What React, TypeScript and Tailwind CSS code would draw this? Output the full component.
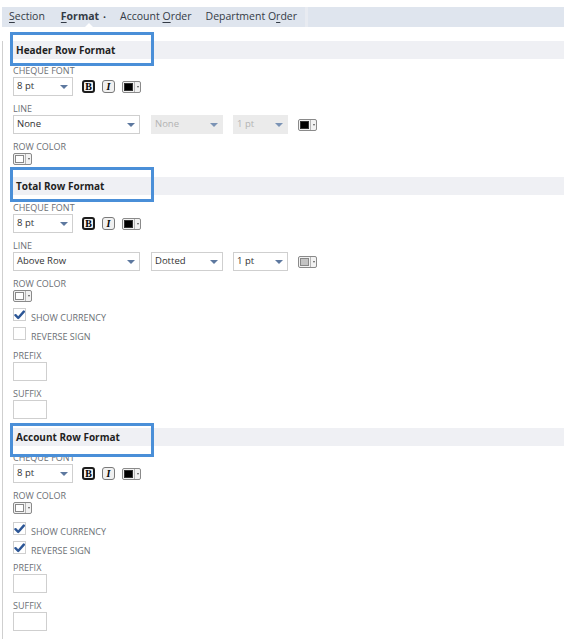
import React from 'react';

const font = { fontFamily: '"Open Sans", "Liberation Sans", sans-serif' };

function Label({ children, className = '' }: { children: React.ReactNode; className?: string }) {
    return <div className={`h-[13px] leading-[13px] text-[9px] uppercase text-[#6c6f75] ${className}`}>{children}</div>;
}

function Arrow({ disabled }: { disabled?: boolean }) {
    return (
        <span
            className={`w-0 h-0 border-l-[4.5px] border-r-[4.5px] border-t-[4.5px] border-l-transparent border-r-transparent ${
                disabled ? 'border-t-[#7b93b5]' : 'border-t-[#5d789f]'
            }`}
        />
    );
}

function Select({ value, width, disabled }: { value: string; width: string; disabled?: boolean }) {
    return (
        <div
            className={`h-[19px] flex items-center justify-between pl-[3px] pr-[4px] text-[9.5px] ${width} ${
                disabled ? 'bg-[#ebebeb] text-[#b3b3b3] border border-[#ebebeb]' : 'bg-white text-[#333] border border-[#cfcfcf]'
            }`}
        >
            <span>{value}</span>
            <Arrow disabled={disabled} />
        </div>
    );
}

function ColorButton({ fill }: { fill: 'black' | 'white' | 'gray' }) {
    const inner =
        fill === 'black'
            ? 'bg-black border-[#333]'
            : fill === 'gray'
            ? 'bg-[#c4c4c4] border-[#888]'
            : 'bg-white border-[#888]';
    return (
        <div className="w-[19px] h-[12px] flex rounded-[2px] border border-[#8a8a8a] bg-[#f2f2f2]">
            <div className="flex-1 flex items-center justify-center border-r border-[#b5b5b5]">
                <div className={`w-[9px] h-[8px] border ${inner}`} />
            </div>
            <div className="w-[5px] flex items-center justify-center">
                <span className="w-0 h-0 border-l-[1.5px] border-r-[1.5px] border-t-[2px] border-l-transparent border-r-transparent border-t-[#555]" />
            </div>
        </div>
    );
}

function StyleButtons() {
    return (
        <>
            <div className="ml-[9px] w-[13px] h-[13px] rounded-[3px] border-[2px] border-[#1c1c1c] bg-[#f0f0f0] flex items-center justify-center text-[10px] font-bold leading-none text-black" style={{ fontFamily: '"Liberation Serif", serif' }}>
                B
            </div>
            <div className="ml-[7px] w-[13px] h-[13px] rounded-[3px] border border-[#7a7a7a] bg-[#f0f0f0] flex items-center justify-center text-[10px] font-bold italic leading-none text-black" style={{ fontFamily: '"Liberation Serif", serif' }}>
                I
            </div>
            <div className="ml-[7px]">
                <ColorButton fill="black" />
            </div>
        </>
    );
}

function FontRow() {
    return (
        <div className="flex items-center">
            <Select value="8 pt" width="w-[60px]" />
            <StyleButtons />
        </div>
    );
}

function Checkbox({ checked, label, className = '' }: { checked?: boolean; label: string; className?: string }) {
    return (
        <div className={`flex items-start h-[13px] ${className}`}>
            <div className="w-[13px] h-[13px] border border-[#cfcfcf] bg-white flex items-center justify-center">
                {checked && (
                    <svg width="11" height="10" viewBox="0 0 11 10">
                        <path d="M1.5 5.2 L4.2 8 L9.8 1.6" fill="none" stroke="#2c5696" strokeWidth="2.4" strokeLinecap="round" strokeLinejoin="round" />
                    </svg>
                )}
            </div>
            <span className="ml-[5px] mt-[3px] leading-[13px] text-[9px] text-[#6c6f75]">{label}</span>
        </div>
    );
}

function TextBox() {
    return <div className="w-[34px] h-[19px] border border-[#cfcfcf] bg-white" />;
}

function SectionHeader({ title, boxTop, boxHeight, className = '' }: { title: string; boxTop: string; boxHeight: string; className?: string }) {
    return (
        <div className={`relative -ml-[3px] h-[18px] bg-[#eff0f4] flex items-center pl-[6px] ${className}`}>
            <span className="text-[10px] font-bold text-[#1f1f1f]">{title}</span>
            <div className={`absolute left-0 w-[144px] border-[3px] border-[#4a8fd8] ${boxTop} ${boxHeight}`} />
        </div>
    );
}

export default function App() {
    return (
        <div className="w-[564px] h-[639px] bg-white pt-[7px] overflow-hidden" style={font}>
            <div className="relative ml-[2px] h-[20px] bg-[#dfe5ee] flex items-center text-[10.5px] text-[#343b46]">
                <span className="ml-[7px]">
                    <span className="underline underline-offset-2">S</span>ection
                </span>
                <span className="ml-[16px] font-bold">
                    <span className="underline underline-offset-2">F</span>ormat
                </span>
                <span className="ml-[4px] text-[8px]">•</span>
                <span className="ml-[14px]">
                    Account <span className="underline underline-offset-2">O</span>rder
                </span>
                <span className="ml-[14px]">
                    Department O<span className="underline underline-offset-2">r</span>der
                </span>
                <div className="ml-[8px] w-[3px] h-full bg-[#e8ebf1]" />
                <span className="absolute left-[83px] bottom-0 w-0 h-0 border-l-[4px] border-r-[4px] border-b-[4px] border-l-transparent border-r-transparent border-b-white" />
            </div>

            <div className="ml-[2px] h-[611px] border-l border-b border-[#cfcfcf] pl-[10px]">
                {/* Header Row Format */}
                <SectionHeader title="Header Row Format" boxTop="-top-[9px]" boxHeight="h-[34px]" className="mt-[14px]" />
                <Label className="mt-[5px]">Cheque Font</Label>
                <FontRow />
                <Label className="mt-[6px]">Line</Label>
                <div className="flex items-center">
                    <Select value="None" width="w-[127px]" />
                    <div className="ml-[11px]">
                        <Select value="None" width="w-[72px]" disabled />
                    </div>
                    <div className="ml-[10px]">
                        <Select value="1 pt" width="w-[55px]" disabled />
                    </div>
                    <div className="ml-[10px]">
                        <ColorButton fill="black" />
                    </div>
                </div>
                <Label className="mt-[6px]">Row Color</Label>
                <ColorButton fill="white" />

                {/* Total Row Format */}
                <SectionHeader title="Total Row Format" boxTop="-top-[10px]" boxHeight="h-[35px]" className="mt-[12px]" />
                <Label className="mt-[6px]">Cheque Font</Label>
                <FontRow />
                <Label className="mt-[6px]">Line</Label>
                <div className="flex items-center">
                    <Select value="Above Row" width="w-[127px]" />
                    <div className="ml-[11px]">
                        <Select value="Dotted" width="w-[72px]" />
                    </div>
                    <div className="ml-[10px]">
                        <Select value="1 pt" width="w-[55px]" />
                    </div>
                    <div className="ml-[10px]">
                        <ColorButton fill="gray" />
                    </div>
                </div>
                <Label className="mt-[6px]">Row Color</Label>
                <ColorButton fill="white" />
                <Checkbox checked label="SHOW CURRENCY" className="mt-[6px]" />
                <Checkbox label="REVERSE SIGN" className="mt-[6px]" />
                <Label className="mt-[9px]">Prefix</Label>
                <TextBox />
                <Label className="mt-[6px]">Suffix</Label>
                <TextBox />

                {/* Account Row Format */}
                <SectionHeader title="Account Row Format" boxTop="-top-[5px]" boxHeight="h-[34px]" className="mt-[9px]" />
                <Label className="mt-[5px]">Cheque Font</Label>
                <FontRow />
                <Label className="mt-[6px]">Row Color</Label>
                <ColorButton fill="white" />
                <Checkbox checked label="SHOW CURRENCY" className="mt-[8px]" />
                <Checkbox checked label="REVERSE SIGN" className="mt-[6px]" />
                <Label className="mt-[7px]">Prefix</Label>
                <TextBox />
                <Label className="mt-[6px]">Suffix</Label>
                <TextBox />
            </div>
        </div>
    );
}
